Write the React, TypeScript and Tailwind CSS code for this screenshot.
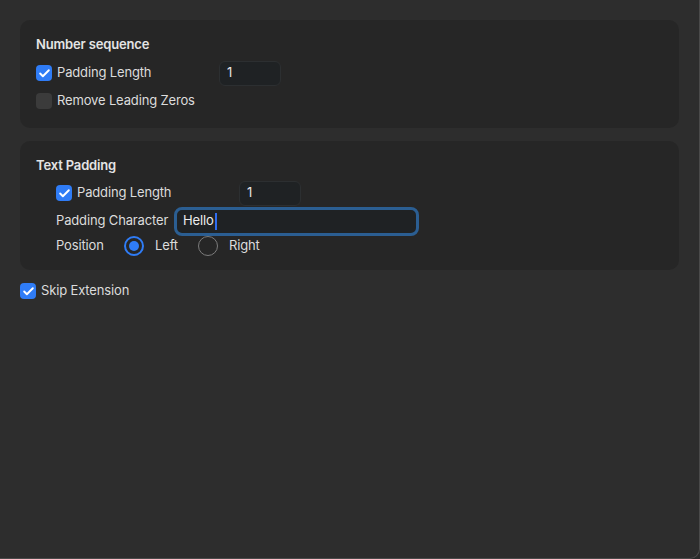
import { Check } from "lucide-react";

function Checkbox({ checked }: { checked: boolean }) {
  return checked ? (
    <span className="flex h-4 w-4 shrink-0 items-center justify-center rounded-[4px] bg-[#2f7cf6]">
      <Check size={13} strokeWidth={3.5} className="text-white" />
    </span>
  ) : (
    <span className="h-4 w-4 shrink-0 rounded-[4px] bg-[#3b3b3b]" />
  );
}

function Radio({ checked }: { checked: boolean }) {
  return checked ? (
    <span className="flex h-5 w-5 shrink-0 items-center justify-center rounded-full border-2 border-[#2f7cf6]">
      <span className="h-2.5 w-2.5 rounded-full bg-[#2f7cf6]" />
    </span>
  ) : (
    <span className="h-5 w-5 shrink-0 rounded-full border-[1.5px] border-[#7c7c7c]" />
  );
}

function NumberField({ value }: { value: string }) {
  return (
    <div className="flex h-[25px] w-[62px] items-center rounded-[6px] border border-[#2c2f31] bg-[#1f2224] px-[7px] text-[#e6e6e6]">
      {value}
    </div>
  );
}

export default function App() {
  return (
    <div
      className="h-[559px] w-[700px] bg-[#2a2a2a] text-[13px] tracking-[-0.15px] text-[#dcdcdc]"
      style={{ fontFamily: "Inter, 'Noto Sans', sans-serif" }}
    >
      <div className="flex h-full w-full flex-col rounded-br-[10px] border-r border-b border-[#4a4a4a] bg-[#2d2d2d] p-5">
        <section className="rounded-[10px] bg-[#262626] px-4 pt-4 pb-[13px]">
          <h3 className="h-4 leading-4 font-semibold text-[#e4e4e4]">Number sequence</h3>
          <div className="mt-[7px] flex h-7 items-center">
            <label className="flex w-[183px] items-center gap-[5px]">
              <Checkbox checked />
              <span>Padding Length</span>
            </label>
            <NumberField value="1" />
          </div>
          <label className="flex h-7 items-center gap-[5px]">
            <Checkbox checked={false} />
            <span>Remove Leading Zeros</span>
          </label>
        </section>

        <section className="mt-[13px] rounded-[10px] bg-[#262626] px-4 pt-4 pb-[13px]">
          <h3 className="h-4 leading-4 font-semibold text-[#e4e4e4]">Text Padding</h3>
          <div className="mt-1.5 pl-5">
            <div className="flex h-7 items-center">
              <label className="flex w-[183px] items-center gap-[5px]">
                <Checkbox checked />
                <span>Padding Length</span>
              </label>
              <NumberField value="1" />
            </div>
            <div className="flex h-7 items-center">
              <span className="w-[118px]">Padding Character</span>
              <div className="flex h-[29px] w-[245px] items-center rounded-[8px] border-[3px] border-[#2b5e92] bg-[#1f2224] px-[6px] text-[#ececec]">
                Hello
                <span className="ml-px h-[17px] w-[2px] bg-[#2f6df0]" />
              </div>
            </div>
            <div className="flex h-[22px] items-center">
              <span className="w-[68px]">Position</span>
              <label className="flex w-[74px] items-center gap-[11px]">
                <Radio checked />
                <span>Left</span>
              </label>
              <label className="flex items-center gap-[11px]">
                <Radio checked={false} />
                <span>Right</span>
              </label>
            </div>
          </div>
        </section>

        <label className="mt-[13px] flex h-4 items-center gap-[5px]">
          <Checkbox checked />
          <span>Skip Extension</span>
        </label>
      </div>
    </div>
  );
}
